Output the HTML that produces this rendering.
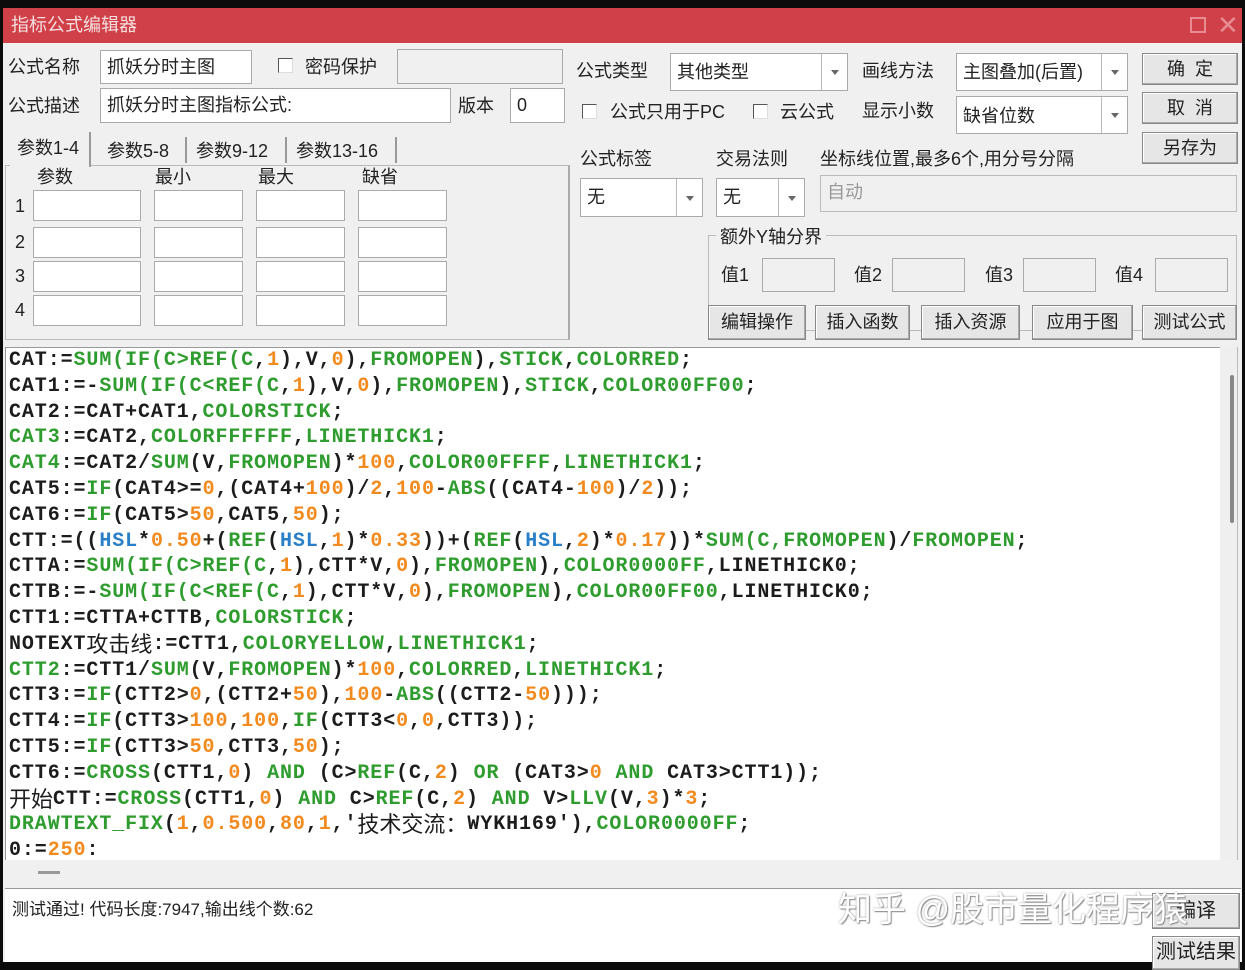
<!DOCTYPE html>
<html><head><meta charset="utf-8">
<style>
*{margin:0;padding:0;box-sizing:border-box}
body{width:1245px;height:962px;background:#0b0b0b;position:relative;overflow:hidden;font-family:"Liberation Sans","Noto Sans CJK SC",sans-serif;color:#222}
.a{position:absolute}
.win{left:3px;top:8px;width:1239px;height:954px;background:#f0f0f0}
.title{left:3px;top:8px;width:1239px;height:35px;background:#cf4049;font-size:18px;line-height:35px;padding-left:8px;color:#f6dede}
.lb{font-size:18px;line-height:22px;white-space:nowrap;color:#222}
.in{background:#fff;border:1px solid #aaa;font-size:18px;line-height:32px;padding-left:6px;white-space:nowrap}
.gr{background:#f0f0f0}
.cb{width:15px;height:15px;border:1px solid #555;border-right-color:#ddd;border-bottom-color:#ddd;background:#fff}
.btn{background:#e6e6e6;border:1px solid #888;box-shadow:inset -1px -1px 0 #aaa,inset 1px 1px 0 #fff;font-size:18px;text-align:center;white-space:nowrap}
.dd{border-left:1px solid #bbb;width:26px;top:0;bottom:0;right:0}
.dd:after{content:"";position:absolute;left:9px;top:50%;margin-top:-2px;border:4px solid transparent;border-top:5px solid #666}
.code{left:5px;top:347px;width:1215px;height:513px;background:#fff;border-left:1px solid #999;border-top:1px solid #999;overflow:hidden}
.code div{font-family:"Liberation Mono","Noto Sans CJK SC",monospace;font-weight:bold;font-size:20px;letter-spacing:0.9px;height:25.8px;line-height:25.8px;color:#1c1c1c;white-space:pre;position:relative;left:3px;overflow:visible}
.g{color:#2e9c2e}.o{color:#f28a1e}.b{color:#2a80c8}
.cj{font-family:"Noto Sans CJK SC",sans-serif;font-weight:normal;font-size:22px;letter-spacing:0;display:inline-block;height:22px;line-height:22px;vertical-align:-3px}
</style></head><body>
<div class="a win"></div>
<div class="a title">指标公式编辑器</div>
<div class="a" style="left:1190px;top:17px;width:16px;height:16px;border:2px solid #e88c92"></div>
<div class="a" style="left:1217px;top:8px;color:#e88c92;font-size:26px;line-height:34px">✕</div>

<div class="a lb" style="left:8px;top:56px">公式名称</div>
<div class="a in" style="left:100px;top:50px;width:152px;height:34px">抓妖分时主图</div>
<div class="a cb" style="left:278px;top:58px"></div>
<div class="a lb" style="left:305px;top:56px">密码保护</div>
<div class="a in gr" style="left:397px;top:49px;width:166px;height:35px"></div>
<div class="a lb" style="left:8px;top:95px">公式描述</div>
<div class="a in" style="left:100px;top:88px;width:351px;height:35px">抓妖分时主图指标公式:</div>
<div class="a lb" style="left:458px;top:95px">版本</div>
<div class="a in" style="left:510px;top:88px;width:55px;height:35px">0</div>

<div class="a" style="left:5px;top:165px;width:565px;height:175px;border:1px solid #bbb;border-right:2px solid #aaa"></div>
<div class="a" style="left:10px;top:132px;width:81px;height:35px;background:#f0f0f0;border-right:2px solid #999"></div>
<div class="a lb" style="left:17px;top:137px">参数1-4</div>
<div class="a lb" style="left:107px;top:140px">参数5-8</div>
<div class="a" style="left:185px;top:137px;height:26px;border-left:2px solid #999"></div>
<div class="a lb" style="left:196px;top:140px">参数9-12</div>
<div class="a" style="left:285px;top:137px;height:26px;border-left:2px solid #999"></div>
<div class="a lb" style="left:296px;top:140px">参数13-16</div>
<div class="a" style="left:395px;top:137px;height:26px;border-left:2px solid #999"></div>
<div class="a lb" style="left:37px;top:166px">参数</div>
<div class="a lb" style="left:155px;top:166px">最小</div>
<div class="a lb" style="left:258px;top:166px">最大</div>
<div class="a lb" style="left:362px;top:166px">缺省</div>
<div class="a lb" style="left:15px;top:195px">1</div>
<div class="a lb" style="left:15px;top:231px">2</div>
<div class="a lb" style="left:15px;top:265px">3</div>
<div class="a lb" style="left:15px;top:299px">4</div>
<div class="a in" style="left:33px;top:190px;width:108px;height:31px"></div><div class="a in" style="left:154px;top:190px;width:89px;height:31px"></div><div class="a in" style="left:256px;top:190px;width:89px;height:31px"></div><div class="a in" style="left:358px;top:190px;width:89px;height:31px"></div>
<div class="a in" style="left:33px;top:227px;width:108px;height:31px"></div><div class="a in" style="left:154px;top:227px;width:89px;height:31px"></div><div class="a in" style="left:256px;top:227px;width:89px;height:31px"></div><div class="a in" style="left:358px;top:227px;width:89px;height:31px"></div>
<div class="a in" style="left:33px;top:261px;width:108px;height:31px"></div><div class="a in" style="left:154px;top:261px;width:89px;height:31px"></div><div class="a in" style="left:256px;top:261px;width:89px;height:31px"></div><div class="a in" style="left:358px;top:261px;width:89px;height:31px"></div>
<div class="a in" style="left:33px;top:295px;width:108px;height:31px"></div><div class="a in" style="left:154px;top:295px;width:89px;height:31px"></div><div class="a in" style="left:256px;top:295px;width:89px;height:31px"></div><div class="a in" style="left:358px;top:295px;width:89px;height:31px"></div>

<div class="a lb" style="left:576px;top:60px">公式类型</div>
<div class="a in" style="left:670px;top:53px;width:178px;height:38px;line-height:36px">其他类型<div class="a dd"></div></div>
<div class="a lb" style="left:862px;top:60px">画线方法</div>
<div class="a in" style="left:956px;top:53px;width:172px;height:38px;line-height:36px">主图叠加(后置)<div class="a dd"></div></div>
<div class="a btn" style="left:1142px;top:53px;width:96px;height:32px;line-height:30px">确&nbsp;&nbsp;定</div>
<div class="a cb" style="left:582px;top:104px"></div>
<div class="a lb" style="left:610px;top:101px">公式只用于PC</div>
<div class="a cb" style="left:753px;top:104px"></div>
<div class="a lb" style="left:780px;top:101px">云公式</div>
<div class="a lb" style="left:862px;top:100px">显示小数</div>
<div class="a in" style="left:956px;top:96px;width:172px;height:38px;line-height:38px">缺省位数<div class="a dd"></div></div>
<div class="a btn" style="left:1142px;top:92px;width:96px;height:32px;line-height:30px">取&nbsp;&nbsp;消</div>
<div class="a btn" style="left:1142px;top:132px;width:96px;height:32px;line-height:30px">另存为</div>
<div class="a lb" style="left:580px;top:148px">公式标签</div>
<div class="a lb" style="left:716px;top:148px">交易法则</div>
<div class="a lb" style="left:820px;top:148px">坐标线位置,最多6个,用分号分隔</div>
<div class="a in" style="left:580px;top:178px;width:123px;height:39px;line-height:37px">无<div class="a dd"></div></div>
<div class="a in" style="left:716px;top:178px;width:89px;height:39px;line-height:37px">无<div class="a dd"></div></div>
<div class="a in gr" style="left:820px;top:175px;width:417px;height:37px;color:#999;border-color:#bbb">自动</div>
<div class="a" style="left:708px;top:235px;width:529px;height:96px;border:1px solid #bbb"></div>
<div class="a lb" style="left:716px;top:226px;background:#f0f0f0;padding:0 4px">额外Y轴分界</div>
<div class="a lb" style="left:721px;top:264px">值1</div><div class="a in gr" style="left:762px;top:258px;width:73px;height:34px"></div>
<div class="a lb" style="left:854px;top:264px">值2</div><div class="a in gr" style="left:892px;top:258px;width:73px;height:34px"></div>
<div class="a lb" style="left:985px;top:264px">值3</div><div class="a in gr" style="left:1023px;top:258px;width:73px;height:34px"></div>
<div class="a lb" style="left:1115px;top:264px">值4</div><div class="a in gr" style="left:1155px;top:258px;width:73px;height:34px"></div>
<div class="a btn" style="left:708px;top:305px;width:98px;height:35px;line-height:33px">编辑操作</div>
<div class="a btn" style="left:815px;top:305px;width:95px;height:35px;line-height:33px">插入函数</div>
<div class="a btn" style="left:921px;top:305px;width:99px;height:35px;line-height:33px">插入资源</div>
<div class="a btn" style="left:1032px;top:305px;width:101px;height:35px;line-height:33px">应用于图</div>
<div class="a btn" style="left:1142px;top:305px;width:95px;height:35px;line-height:33px">测试公式</div>

<div class="a code">
<div>CAT:=<span class="g">SUM(IF(C&gt;REF(C</span>,<span class="o">1</span>),V,<span class="o">0</span>),<span class="g">FROMOPEN</span>),<span class="g">STICK</span>,<span class="g">COLORRED</span>;</div>
<div>CAT1:=-<span class="g">SUM(IF(C&lt;REF(C</span>,<span class="o">1</span>),V,<span class="o">0</span>),<span class="g">FROMOPEN</span>),<span class="g">STICK</span>,<span class="g">COLOR00FF00</span>;</div>
<div>CAT2:=CAT+CAT1,<span class="g">COLORSTICK</span>;</div>
<div><span class="g">CAT3</span>:=CAT2,<span class="g">COLORFFFFFF</span>,<span class="g">LINETHICK1</span>;</div>
<div><span class="g">CAT4</span>:=CAT2/<span class="g">SUM</span>(V,<span class="g">FROMOPEN</span>)*<span class="o">100</span>,<span class="g">COLOR00FFFF</span>,<span class="g">LINETHICK1</span>;</div>
<div>CAT5:=<span class="g">IF</span>(CAT4&gt;=<span class="o">0</span>,(CAT4+<span class="o">100</span>)/<span class="o">2</span>,<span class="o">100</span>-<span class="g">ABS</span>((CAT4-<span class="o">100</span>)/<span class="o">2</span>));</div>
<div>CAT6:=<span class="g">IF</span>(CAT5&gt;<span class="o">50</span>,CAT5,<span class="o">50</span>);</div>
<div>CTT:=((<span class="b">HSL</span>*<span class="o">0.50</span>+(<span class="g">REF</span>(<span class="b">HSL</span>,<span class="o">1</span>)*<span class="o">0.33</span>))+(<span class="g">REF</span>(<span class="b">HSL</span>,<span class="o">2</span>)*<span class="o">0.17</span>))*<span class="g">SUM(C,FROMOPEN</span>)/<span class="g">FROMOPEN</span>;</div>
<div>CTTA:=<span class="g">SUM(IF(C&gt;REF(C</span>,<span class="o">1</span>),CTT*V,<span class="o">0</span>),<span class="g">FROMOPEN</span>),<span class="g">COLOR0000FF</span>,LINETHICK0;</div>
<div>CTTB:=-<span class="g">SUM(IF(C&lt;REF(C</span>,<span class="o">1</span>),CTT*V,<span class="o">0</span>),<span class="g">FROMOPEN</span>),<span class="g">COLOR00FF00</span>,LINETHICK0;</div>
<div>CTT1:=CTTA+CTTB,<span class="g">COLORSTICK</span>;</div>
<div>NOTEXT<span class="cj">攻击线</span>:=CTT1,<span class="g">COLORYELLOW</span>,<span class="g">LINETHICK1</span>;</div>
<div><span class="g">CTT2</span>:=CTT1/<span class="g">SUM</span>(V,<span class="g">FROMOPEN</span>)*<span class="o">100</span>,<span class="g">COLORRED</span>,<span class="g">LINETHICK1</span>;</div>
<div>CTT3:=<span class="g">IF</span>(CTT2&gt;<span class="o">0</span>,(CTT2+<span class="o">50</span>),<span class="o">100</span>-<span class="g">ABS</span>((CTT2-<span class="o">50</span>)));</div>
<div>CTT4:=<span class="g">IF</span>(CTT3&gt;<span class="o">100</span>,<span class="o">100</span>,<span class="g">IF</span>(CTT3&lt;<span class="o">0</span>,<span class="o">0</span>,CTT3));</div>
<div>CTT5:=<span class="g">IF</span>(CTT3&gt;<span class="o">50</span>,CTT3,<span class="o">50</span>);</div>
<div>CTT6:=<span class="g">CROSS</span>(CTT1,<span class="o">0</span>) <span class="g">AND</span> (C&gt;<span class="g">REF</span>(C,<span class="o">2</span>) <span class="g">OR</span> (CAT3&gt;<span class="o">0</span> <span class="g">AND</span> CAT3&gt;CTT1));</div>
<div><span class="cj">开始</span>CTT:=<span class="g">CROSS</span>(CTT1,<span class="o">0</span>) <span class="g">AND</span> C&gt;<span class="g">REF</span>(C,<span class="o">2</span>) <span class="g">AND</span> V&gt;<span class="g">LLV</span>(V,<span class="o">3</span>)*<span class="o">3</span>;</div>
<div><span class="g">DRAWTEXT_FIX</span>(<span class="o">1</span>,<span class="o">0.500</span>,<span class="o">80</span>,<span class="o">1</span>,'<span class="cj">技术交流：</span>WYKH169'),<span class="g">COLOR0000FF</span>;</div>
<div>0:=<span class="o">250</span>:</div>
</div>
<div class="a" style="left:1220px;top:347px;width:18px;height:513px;background:#efefef;border-right:1px solid #bbb"></div>
<div class="a" style="left:1230px;top:375px;width:4px;height:148px;background:#888;border-radius:2px"></div>
<div class="a" style="left:38px;top:871px;width:22px;height:3px;background:#999"></div>
<div class="a" style="left:5px;top:888px;width:1236px;height:74px;background:#fff;border-top:1px solid #999"></div>
<div class="a" style="left:12px;top:899px;font-size:17px;line-height:22px;white-space:nowrap">测试通过! 代码长度:7947,输出线个数:62</div>
<div class="a btn" style="left:1152px;top:893px;width:88px;height:36px;line-height:34px;font-size:20px">编译</div>
<div class="a btn" style="left:1152px;top:936px;width:88px;height:34px;line-height:30px;font-size:20px">测试结果</div>
<div class="a" style="left:838px;top:888px;font-size:34px;line-height:44px;color:#fff;text-shadow:0 0 2px #999,1px 1px 1px #888;white-space:nowrap">知乎 @股市量化程序猿</div>
</body></html>
